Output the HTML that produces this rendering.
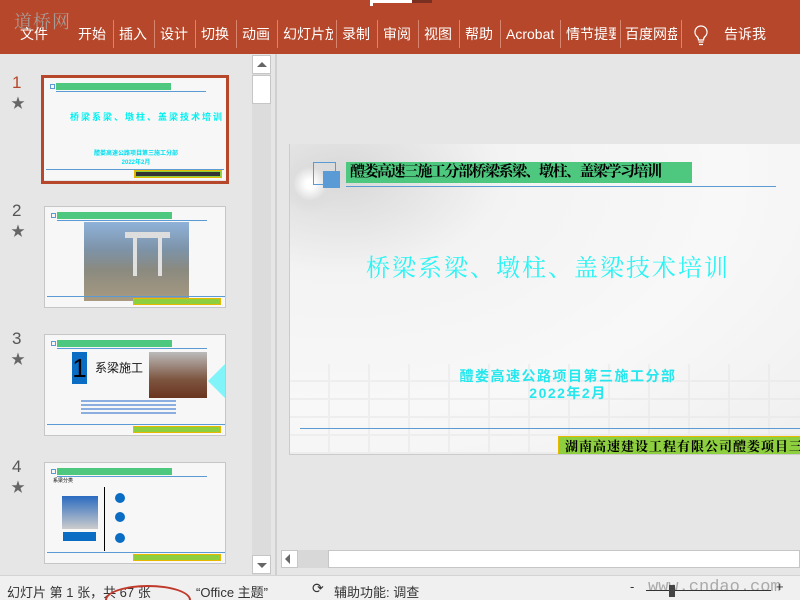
<!DOCTYPE html>
<html><head><meta charset="utf-8">
<style>
*{margin:0;padding:0;box-sizing:border-box}
html,body{width:800px;height:600px;overflow:hidden}
body{background:#e6e6e6;font-family:"Liberation Sans","Noto Sans CJK SC",sans-serif;position:relative}
.abs{position:absolute}
#rib{left:0;top:0;width:800px;height:54px;background:#b7472a}
.tab{position:absolute;top:24px;height:20px;color:#fff;font-size:14px;line-height:20px;white-space:nowrap;overflow:hidden}
.sep{position:absolute;top:20px;width:1px;height:28px;background:#d8856f}
.thumb{position:absolute;left:44px;width:182px;height:102px;background:#f7f7f7;border:1px solid #c6c6c6;overflow:hidden}
.num{position:absolute;left:12px;font-size:17px;color:#555}
.star{position:absolute;left:11px;font-size:14px;color:#666}
.tb{position:absolute;left:6px;top:6px;width:5px;height:5px;border:1px solid #5b9bd5}
.tg{position:absolute;left:12px;top:5px;width:115px;height:7px;background:#4ec77f}
.tl{position:absolute;left:12px;top:13px;width:150px;height:1px;background:#5b9bd5}
.bl{position:absolute;left:2px;bottom:10px;width:178px;height:1px;background:#5b9bd5}
.by{position:absolute;right:4px;bottom:2px;width:88px;height:7px;background:#8dcf3f;border:1px solid #e7b800}
</style></head><body>
<div id="rib" class="abs">
  <div class="abs" style="left:14px;top:8px;font-size:18px;color:#a89a95;font-family:'Noto Serif CJK SC',serif;letter-spacing:1px">道桥网</div>
  <div class="abs" style="left:370px;top:0;width:3px;height:6px;background:#fff"></div>
  <div class="abs" style="left:372px;top:0;width:60px;height:3px;background:#7a3020"></div>
  <div class="abs" style="left:372px;top:0;width:40px;height:3px;background:#fff"></div>
  <div class="tab" style="left:20px">文件</div>
  <div class="tab" style="left:78px">开始</div><div class="sep" style="left:113px"></div>
  <div class="tab" style="left:119px">插入</div><div class="sep" style="left:154px"></div>
  <div class="tab" style="left:160px">设计</div><div class="sep" style="left:195px"></div>
  <div class="tab" style="left:201px">切换</div><div class="sep" style="left:236px"></div>
  <div class="tab" style="left:242px">动画</div><div class="sep" style="left:277px"></div>
  <div class="tab" style="left:283px;width:50px">幻灯片放</div><div class="sep" style="left:336px"></div>
  <div class="tab" style="left:342px">录制</div><div class="sep" style="left:377px"></div>
  <div class="tab" style="left:383px">审阅</div><div class="sep" style="left:418px"></div>
  <div class="tab" style="left:424px">视图</div><div class="sep" style="left:459px"></div>
  <div class="tab" style="left:465px">帮助</div><div class="sep" style="left:500px"></div>
  <div class="tab" style="left:506px;width:50px">Acrobat</div><div class="sep" style="left:560px"></div>
  <div class="tab" style="left:566px;width:50px">情节提要</div><div class="sep" style="left:620px"></div>
  <div class="tab" style="left:625px;width:52px">百度网盘</div><div class="sep" style="left:681px"></div>
  <svg class="abs" style="left:692px;top:24px" width="18" height="22" viewBox="0 0 18 22"><path d="M9 2a6 6 0 0 0-4 10.5c1 1 1.5 2 1.5 3.5h5c0-1.5.5-2.5 1.5-3.5A6 6 0 0 0 9 2zM6.5 18h5M7 20.5h4" fill="none" stroke="#fff" stroke-width="1.3"/></svg>
  <div class="tab" style="left:724px">告诉我</div>
</div>

<div class="abs" style="left:0;top:54px;width:275px;height:521px;background:#e6e6e6"></div>
<div class="num" style="top:73px;color:#b7472a">1</div><div class="star" style="top:93px">★</div>
<div class="num" style="top:201px">2</div><div class="star" style="top:221px">★</div>
<div class="num" style="top:329px">3</div><div class="star" style="top:349px">★</div>
<div class="num" style="top:457px">4</div><div class="star" style="top:477px">★</div>
<div class="abs" style="left:41px;top:75px;width:188px;height:109px;border:3px solid #b7472a"></div>
<div class="thumb" style="top:78px;border:none">
  <div class="tb"></div><div class="tg"></div><div class="tl"></div>
  <div class="abs" style="left:26px;top:32px;font-size:9px;color:#00f0f0;letter-spacing:2px;font-weight:bold">桥梁系梁、墩柱、盖梁技术培训</div>
  <div class="abs" style="left:50px;top:70px;font-size:6px;color:#00e0f0;text-align:center;width:84px;font-weight:bold">醴娄高速公路项目第三施工分部<br>2022年2月</div>
  <div class="bl"></div><div class="by" style="height:8px;background:#333;border:1px solid #e7b800;box-shadow:inset 0 0 0 1px #8dcf3f"></div>
</div>
<div class="thumb" style="top:206px">
  <div class="tb"></div><div class="tg"></div><div class="tl"></div>
  <div class="abs" style="left:39px;top:15px;width:105px;height:79px;background:linear-gradient(#8fb2d9 0%,#7d93a8 35%,#8a8a80 60%,#a89a80 100%)"></div>
  <div class="abs" style="left:80px;top:25px;width:45px;height:6px;background:#ddd"></div>
  <div class="abs" style="left:88px;top:31px;width:4px;height:38px;background:#e0e0e0"></div>
  <div class="abs" style="left:113px;top:31px;width:4px;height:38px;background:#e0e0e0"></div>
  <div class="bl"></div><div class="by"></div>
</div>
<div class="thumb" style="top:334px">
  <div class="tb"></div><div class="tg"></div><div class="tl"></div>
  <div class="abs" style="left:27px;top:17px;width:15px;height:32px;background:#0b6cc4;color:#000;font-size:26px;line-height:32px;text-align:center">1</div>
  <div class="abs" style="left:50px;top:24px;font-size:12px;color:#111">系梁施工</div>
  <div class="abs" style="left:104px;top:17px;width:58px;height:46px;background:linear-gradient(#bbb,#7d5540 60%,#6a3420)"></div>
  <div class="abs" style="left:163px;top:26px;width:20px;height:40px;background:#80f4f8;clip-path:polygon(100% 0,100% 100%,0 50%)"></div>
  <div class="abs" style="left:36px;top:65px;width:95px;height:14px;background:repeating-linear-gradient(#8aaee0 0 2px,transparent 2px 4px)"></div>
  <div class="bl"></div><div class="by"></div>
</div>
<div class="thumb" style="top:462px">
  <div class="tb"></div><div class="tg"></div><div class="tl"></div>
  <div class="abs" style="left:8px;top:14px;font-size:5px;color:#000">系梁分类</div>
  <div class="abs" style="left:17px;top:33px;width:36px;height:33px;background:linear-gradient(#2a6bc0,#ccc)"></div>
  <div class="abs" style="left:18px;top:69px;width:33px;height:9px;background:#0b6cc4"></div>
  <div class="abs" style="left:59px;top:24px;width:1px;height:64px;background:#000"></div>
  <div class="abs" style="left:70px;top:30px;width:10px;height:10px;border-radius:50%;background:#0b6cc4"></div>
  <div class="abs" style="left:70px;top:49px;width:10px;height:10px;border-radius:50%;background:#0b6cc4"></div>
  <div class="abs" style="left:70px;top:70px;width:10px;height:10px;border-radius:50%;background:#0b6cc4"></div>
  <div class="bl"></div><div class="by"></div>
</div>

<div class="abs" style="left:252px;top:55px;width:19px;height:520px;background:#dcdcdc"></div>
<div class="abs" style="left:252px;top:55px;width:19px;height:19px;background:#fff;border:1px solid #c6c6c6"></div>
<div class="abs" style="left:257px;top:62px;width:0;height:0;border-left:5px solid transparent;border-right:5px solid transparent;border-bottom:5px solid #666"></div>
<div class="abs" style="left:252px;top:75px;width:19px;height:29px;background:#fff;border:1px solid #c6c6c6"></div>
<div class="abs" style="left:252px;top:555px;width:19px;height:19px;background:#fff;border:1px solid #c6c6c6"></div>
<div class="abs" style="left:257px;top:563px;width:0;height:0;border-left:5px solid transparent;border-right:5px solid transparent;border-top:5px solid #666"></div>
<div class="abs" style="left:275px;top:54px;width:2px;height:521px;background:#d0d0d0"></div>

<div class="abs" style="left:289px;top:144px;width:511px;height:311px;background:radial-gradient(ellipse at 10% 10%,#d8d8d8 0%,#f3f3f3 25%,#f8f8f8 60%,#efefef 100%);border-bottom:1px solid #ccc;border-left:1px solid #ccc;overflow:hidden">
  <div class="abs" style="left:-10px;top:10px;width:60px;height:60px;border-radius:50%;background:radial-gradient(#fff 10%,#ddd 40%,transparent 70%)"></div>
  <div class="abs" style="left:0;top:220px;width:511px;height:90px;background:repeating-linear-gradient(90deg,transparent 0 38px,#e4e4e4 38px 40px),repeating-linear-gradient(transparent 0 16px,#e4e4e4 16px 18px);opacity:.45"></div>
  <div class="abs" style="left:23px;top:18px;width:23px;height:23px;border:1px solid #5b9bd5"></div>
  <div class="abs" style="left:33px;top:27px;width:17px;height:17px;background:#5b9bd5"></div>
  <div class="abs" style="left:56px;top:18px;width:346px;height:21px;background:#4ec77f;font-size:15px;line-height:21px;padding-left:4px;color:#000;font-weight:bold;font-family:'Liberation Serif','Noto Serif CJK SC',serif;letter-spacing:-1.5px;white-space:nowrap">醴娄高速三施工分部桥梁系梁、墩柱、盖梁学习培训</div>
  <div class="abs" style="left:56px;top:42px;width:430px;height:1px;background:#5b9bd5"></div>
  <div class="abs" style="left:76px;top:104px;font-size:24px;color:#2af4f4;letter-spacing:2px;font-family:'Noto Serif CJK SC',serif">桥梁系梁、墩柱、盖梁技术培训</div>
  <div class="abs" style="left:128px;top:224px;width:300px;text-align:center;font-size:14px;line-height:17px;color:#25e8ee;font-weight:bold;letter-spacing:1.5px">醴娄高速公路项目第三施工分部<br>2022年2月</div>
  <div class="abs" style="left:10px;top:284px;width:501px;height:1px;background:#5b9bd5"></div>
  <div class="abs" style="left:268px;top:292px;width:250px;height:20px;background:#8dcf3f;border:1px solid #e7b800;font-size:13px;line-height:18px;padding-left:6px;font-weight:bold;color:#000;white-space:nowrap;font-family:'Noto Serif CJK SC',serif;letter-spacing:1px">湖南高速建设工程有限公司醴娄项目三分部</div>
</div>

<div class="abs" style="left:281px;top:550px;width:519px;height:18px;background:#d8d8d8"></div>
<div class="abs" style="left:281px;top:550px;width:17px;height:18px;background:#fff;border:1px solid #c6c6c6"></div>
<div class="abs" style="left:285px;top:554px;width:0;height:0;border-top:5px solid transparent;border-bottom:5px solid transparent;border-right:5px solid #666"></div>
<div class="abs" style="left:328px;top:550px;width:472px;height:18px;background:#fff;border:1px solid #c6c6c6"></div>

<div class="abs" style="left:0;top:575px;width:800px;height:25px;background:#f0f0f0;border-top:1px solid #d4d4d4;font-size:13px;color:#333;overflow:hidden">
  <span class="abs" style="left:7px;top:6px">幻灯片 第 1 张，共 67 张</span>
  <span class="abs" style="left:196px;top:6px">“Office 主题”</span>
  <span class="abs" style="left:312px;top:4px;font-size:14px">⟳</span>
  <span class="abs" style="left:334px;top:6px">辅助功能: 调查</span>
  <div class="abs" style="left:105px;top:9px;width:86px;height:30px;border:2px solid #c0392b;border-radius:50%"></div>
  <span class="abs" style="left:648px;top:2px;color:#aaa;font-size:17px;font-family:'Liberation Mono',monospace">www.cndao.com</span>
  <div class="abs" style="left:646px;top:14px;width:125px;height:1px;background:#333"></div>
  <div class="abs" style="left:669px;top:9px;width:6px;height:12px;background:#444"></div>
  <span class="abs" style="left:630px;top:3px">-</span><span class="abs" style="left:776px;top:3px">+</span>
</div>
</body></html>
